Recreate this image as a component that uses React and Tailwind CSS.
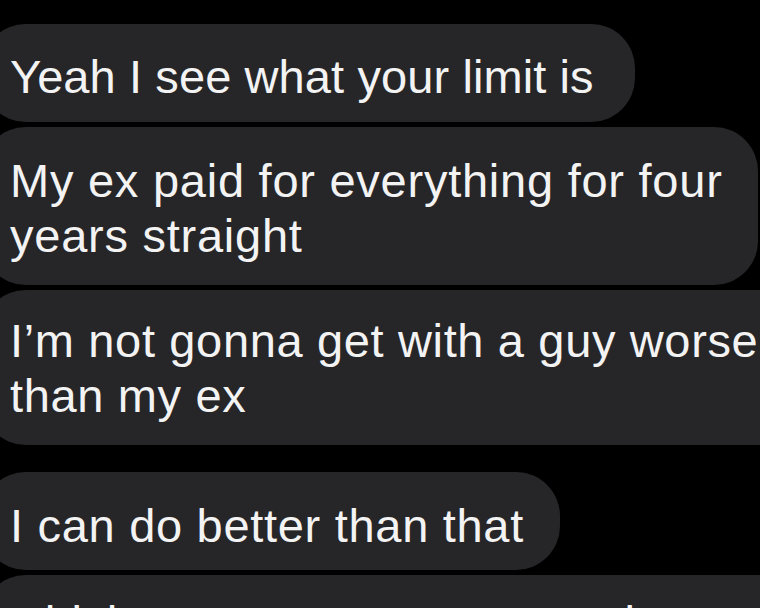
import React from "react";

function Bubble({ className, children }) {
  return (
    <div
      className={
        "-ml-[18px] shrink-0 rounded-[44px] bg-[#262629] pl-[28px] text-[47px] leading-[55px] text-[#f3f3f3] whitespace-nowrap " +
        className
      }
    >
      {children}
    </div>
  );
}

export default function App() {
  return (
    <div
      className="w-[760px] h-[608px] overflow-hidden bg-black"
      style={{ fontFamily: '"Liberation Sans", Arial, sans-serif' }}
    >
      <div className="flex flex-col items-start pt-[24px]">
        <Bubble className="w-[653px] pt-[25px] pb-[18px] tracking-[0.1px]">
          Yeah I see what your limit is
        </Bubble>
        <Bubble className="mt-[5px] w-[776px] pt-[26px] pb-[22px] tracking-[0.75px]">
          My ex paid for everything for four
          <br />
          years straight
        </Bubble>
        <Bubble className="mt-[5px] w-[840px] pt-[23px] pb-[22px] tracking-[0.65px]">
          I’m not gonna get with a guy worse
          <br />
          than my ex
        </Bubble>
        <Bubble className="mt-[27px] w-[578px] pt-[26px] pb-[17px] tracking-[0.7px]">
          I can do better than that
        </Bubble>
        <Bubble className="mt-[5px] w-[840px] pt-[20px] pb-[18px] tracking-[0.7px]">
          which means you gotta step it up
        </Bubble>
      </div>
    </div>
  );
}
